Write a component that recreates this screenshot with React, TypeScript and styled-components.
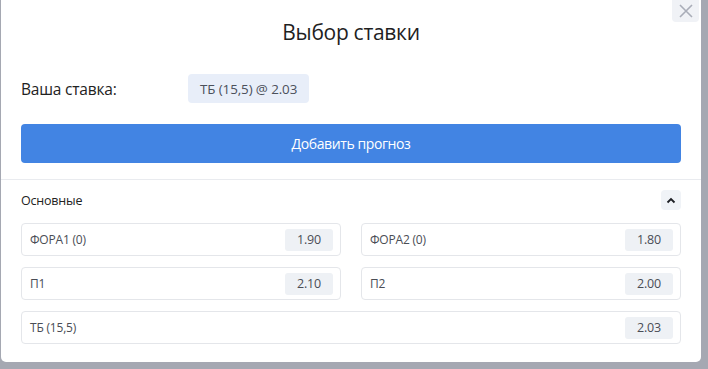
import styled, { createGlobalStyle } from 'styled-components';

const GlobalStyle = createGlobalStyle`
  html, body {
    margin: 0;
    padding: 0;
    background: #a5a8b2;
    font-family: "Open Sans", "Noto Sans", sans-serif;
    overflow: hidden;
  }
`;

const Backdrop = styled.div`
  width: 708px;
  height: 369px;
  padding-left: 1px;
  box-sizing: border-box;
`;

const Modal = styled.div`
  position: relative;
  width: 700px;
  height: 362px;
  background: #ffffff;
  border-radius: 0 0 5px 5px;
  box-sizing: border-box;
  display: flex;
  flex-direction: column;
`;

const CloseButton = styled.button`
  position: absolute;
  top: -4px;
  right: 2px;
  width: 27px;
  height: 26px;
  border: none;
  border-radius: 4px;
  background: #f0f2f6;
  display: flex;
  align-items: center;
  justify-content: center;
  padding: 0;
  padding-top: 3px;
`;

const Top = styled.div`
  padding: 16px 20px 16px;
  display: flex;
  flex-direction: column;
`;

const Title = styled.h2`
  margin: 0;
  text-align: center;
  font-size: 21px;
  line-height: 32px;
  font-weight: 400;
  color: #1f1f1f;
  letter-spacing: -0.3px;
`;

const BetRow = styled.div`
  margin-top: 26px;
  display: flex;
  align-items: center;
`;

const BetLabel = styled.span`
  width: 167px;
  font-size: 15.5px;
  color: #222;
  letter-spacing: -0.2px;
`;

const Chip = styled.span`
  height: 29px;
  padding: 0 12px;
  display: inline-flex;
  align-items: center;
  background: #e8eef9;
  border-radius: 4px;
  font-size: 13.4px;
  color: #4b505b;
  letter-spacing: -0.1px;
`;

const PrimaryButton = styled.button`
  margin-top: 21px;
  height: 39px;
  border: none;
  border-radius: 4px;
  background: #4284e3;
  color: #ffffff;
  font-family: inherit;
  font-size: 14px;
  letter-spacing: -0.4px;
`;

const Section = styled.div`
  border-top: 1px solid #e9ebef;
  padding: 10px 20px 18px;
  flex: 1;
`;

const SectionHeader = styled.div`
  display: flex;
  align-items: center;
  justify-content: space-between;
  height: 20px;
`;

const SectionTitle = styled.span`
  font-size: 12.5px;
  color: #222;
  letter-spacing: -0.2px;
`;

const Toggle = styled.span`
  width: 20px;
  height: 20px;
  border-radius: 4px;
  background: #f0f3f7;
  display: flex;
  align-items: center;
  justify-content: center;
`;

const Grid = styled.div`
  margin-top: 13px;
  display: grid;
  grid-template-columns: 1fr 1fr;
  column-gap: 20px;
  row-gap: 11px;
`;

const Outcome = styled.div<{ $wide?: boolean }>`
  grid-column: ${(p) => (p.$wide ? '1 / -1' : 'auto')};
  height: 33px;
  box-sizing: border-box;
  border: 1px solid #e4e6ea;
  border-radius: 4px;
  padding: 0 7px 0 8px;
  display: flex;
  align-items: center;
  justify-content: space-between;
`;

const OutcomeName = styled.span`
  font-size: 12px;
  color: #4a4d55;
  letter-spacing: -0.2px;
`;

const Odds = styled.span`
  width: 48px;
  height: 22px;
  border-radius: 3px;
  background: #eef1f5;
  display: flex;
  align-items: center;
  justify-content: center;
  font-size: 12.5px;
  color: #4a4d55;
  letter-spacing: -0.2px;
`;

const outcomes = [
  { name: 'ФОРА1 (0)', odds: '1.90' },
  { name: 'ФОРА2 (0)', odds: '1.80' },
  { name: 'П1', odds: '2.10' },
  { name: 'П2', odds: '2.00' },
  { name: 'ТБ (15,5)', odds: '2.03', wide: true },
];

export default function App() {
  return (
    <>
      <GlobalStyle />
      <Backdrop>
        <Modal>
          <CloseButton aria-label="Закрыть">
            <svg width="14" height="14" viewBox="0 0 14 14">
              <path d="M1 1L13 13M13 1L1 13" stroke="#a9adb8" strokeWidth="1.6" fill="none" />
            </svg>
          </CloseButton>
          <Top>
            <Title>Выбор ставки</Title>
            <BetRow>
              <BetLabel>Ваша ставка:</BetLabel>
              <Chip>ТБ (15,5) @ 2.03</Chip>
            </BetRow>
            <PrimaryButton>Добавить прогноз</PrimaryButton>
          </Top>
          <Section>
            <SectionHeader>
              <SectionTitle>Основные</SectionTitle>
              <Toggle>
                <svg width="10" height="7" viewBox="0 0 10 7">
                  <path d="M1.5 5.5L5 2L8.5 5.5" stroke="#1d1f24" strokeWidth="1.8" fill="none" />
                </svg>
              </Toggle>
            </SectionHeader>
            <Grid>
              {outcomes.map((o) => (
                <Outcome key={o.name} $wide={o.wide}>
                  <OutcomeName>{o.name}</OutcomeName>
                  <Odds>{o.odds}</Odds>
                </Outcome>
              ))}
            </Grid>
          </Section>
        </Modal>
      </Backdrop>
    </>
  );
}
